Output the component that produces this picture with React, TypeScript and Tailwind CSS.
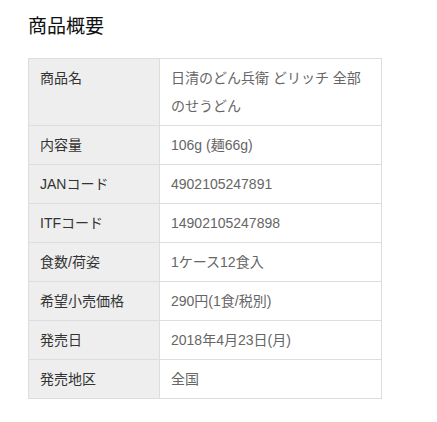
import React from "react";

const rows: [string, string][] = [
  ["商品名", "日清のどん兵衛 どリッチ 全部のせうどん"],
  ["内容量", "106g (麺66g)"],
  ["JANコード", "4902105247891"],
  ["ITFコード", "14902105247898"],
  ["食数/荷姿", "1ケース12食入"],
  ["希望小売価格", "290円(1食/税別)"],
  ["発売日", "2018年4月23日(月)"],
  ["発売地区", "全国"],
];

export default function App() {
  return (
    <div
      className="bg-white w-[437px] h-[422px] pl-[28px] pt-[15px]"
      style={{ fontFamily: '"Liberation Sans", "Noto Sans CJK JP", sans-serif' }}
    >
      <h3 className="text-[19px] leading-[24px] text-[#111] m-0 mb-[19px]">商品概要</h3>
      <table className="w-[354px] border-collapse border border-[#ddd] text-[14px] leading-[28px]">
        <tbody>
          {rows.map(([k, v]) => (
            <tr key={k}>
              <th className="w-[131px] bg-[#eee] border border-[#ddd] text-left font-normal text-[#333] align-top px-[11px] py-[5px]">
                {k}
              </th>
              <td className="border border-[#ddd] text-[#666] align-top px-[11px] py-[5px]">{v}</td>
            </tr>
          ))}
        </tbody>
      </table>
    </div>
  );
}
